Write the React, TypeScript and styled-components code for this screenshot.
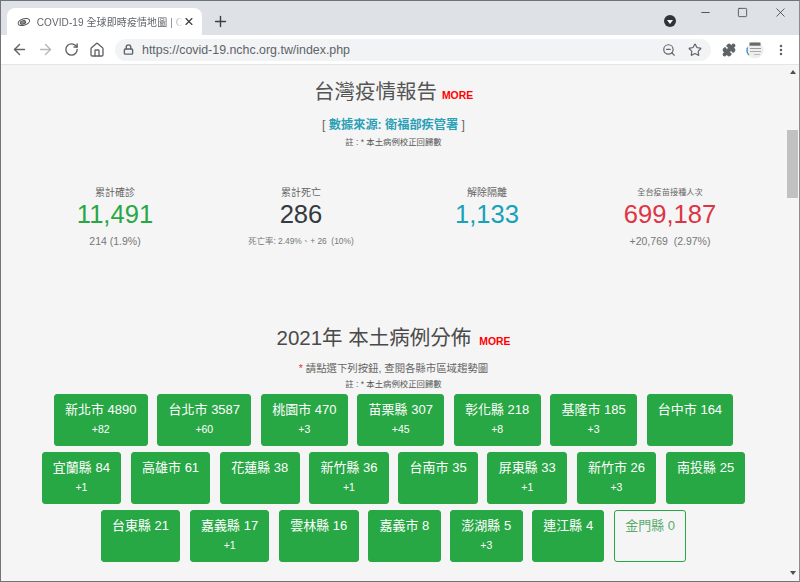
import React from "react";
import styled, { createGlobalStyle } from "styled-components";
import {
  ArrowLeft,
  ArrowRight,
  RotateCw,
  Home,
  Lock,
  ZoomOut,
  Star,
  Puzzle,
  MoreVertical,
  X,
  Plus,
  Minus,
  Square,
} from "lucide-react";

const FONT = `"Liberation Sans", "Noto Sans CJK TC", sans-serif`;

const GlobalStyle = createGlobalStyle`
  html, body {
    margin: 0;
    padding: 0;
    overflow: hidden;
  }
  * {
    box-sizing: border-box;
  }
`;

const Win = styled.div`
  width: 800px;
  height: 582px;
  display: flex;
  flex-direction: column;
  overflow: hidden;
  border: 1px solid #707478;
  border-right-color: #8a8d90;
  font-family: ${FONT};
`;

const TabStrip = styled.div`
  height: 34px;
  flex: none;
  display: flex;
  align-items: flex-end;
  padding-left: 6px;
  background: #dee1e6;
`;

const Tab = styled.div`
  width: 195px;
  height: 27px;
  display: flex;
  align-items: center;
  padding: 0 7px 0 10px;
  background: #fff;
  border-radius: 8px 8px 0 0;
  color: #5f6368;
  font-size: 10px;
`;

const TabTitle = styled.div`
  flex: 1;
  margin-left: 6px;
  letter-spacing: 0.1px;
  white-space: nowrap;
  -webkit-mask-image: linear-gradient(to right, #000 90%, transparent);
  mask-image: linear-gradient(to right, #000 90%, transparent);
`;

const NewTab = styled.div`
  width: 36px;
  height: 27px;
  display: flex;
  align-items: center;
  justify-content: center;
  color: #3c4043;
`;

const Spacer = styled.div`
  flex: 1;
`;

const ProfileDot = styled.div`
  width: 12px;
  height: 12px;
  margin: 0 11px 8px 0;
  display: flex;
  align-items: center;
  justify-content: center;
  border-radius: 50%;
  background: #303438;
  &::after {
    content: "";
    margin-top: 2px;
    border-left: 3px solid transparent;
    border-right: 3px solid transparent;
    border-top: 4px solid #fff;
  }
`;

const WinButtons = styled.div`
  align-self: flex-start;
  height: 23px;
  display: flex;
  align-items: center;
  color: #303438;
`;

const WinButton = styled.div`
  width: 37.5px;
  display: flex;
  justify-content: center;
`;

const Toolbar = styled.div`
  height: 30px;
  flex: none;
  display: flex;
  align-items: center;
  padding-left: 5px;
  background: #fff;
  border-bottom: 1px solid #e4e5e7;
`;

const ToolButton = styled.div<{ $muted?: boolean }>`
  width: 26px;
  height: 26px;
  flex: none;
  display: flex;
  align-items: center;
  justify-content: center;
  color: ${(p) => (p.$muted ? "#b4b7bb" : "#5f6368")};
`;

const Omnibox = styled.div`
  width: 596px;
  height: 22px;
  margin: 0 5px;
  display: flex;
  align-items: center;
  padding: 0 3px 0 8px;
  border-radius: 11px;
  background: #f1f3f4;
  color: #5f6368;
`;

const Url = styled.div`
  flex: 1;
  margin-left: 8px;
  font-size: 12.4px;
  white-space: nowrap;
`;

const Viewport = styled.div`
  flex: 1;
  min-height: 0;
  display: flex;
  background: #f5f5f5;
`;

const Page = styled.main`
  flex: 1;
  min-width: 0;
  display: flex;
  flex-direction: column;
  align-items: center;
  padding-top: 13px;
  color: #555;
`;

const Scrollbar = styled.div`
  width: 13px;
  flex: none;
  display: flex;
  flex-direction: column;
  align-items: center;
  padding-top: 5px;
`;

const ScrollArrow = styled.div<{ $down?: boolean }>`
  width: 0;
  height: 0;
  border-left: 3.5px solid transparent;
  border-right: 3.5px solid transparent;
  ${(p) =>
    p.$down
      ? "border-top: 4px solid #505050; margin-top: auto; margin-bottom: 6px;"
      : "border-bottom: 4px solid #505050;"}
`;

const ScrollThumb = styled.div`
  width: 11px;
  height: 68px;
  margin-top: 56px;
  background: #c1c1c1;
`;

const Heading = styled.h1`
  margin: 0;
  display: flex;
  align-items: baseline;
  gap: 5px;
  font-size: 20.5px;
  line-height: 28px;
  font-weight: 400;
  color: #555;
`;

const HeadingWide = styled(Heading)`
  gap: 8px;
  margin-top: 76px;
  color: #4a4a4a;
`;

const More = styled.span`
  font-size: 10.4px;
  font-weight: 700;
  color: #ff0000;
`;

const Source = styled.div`
  margin-top: 7px;
  font-size: 12.2px;
  line-height: 16px;
  color: #666;
  b {
    color: #2b9fb6;
  }
`;

const Note = styled.div<{ $tight?: boolean }>`
  margin-top: ${(p) => (p.$tight ? "2px" : "3px")};
  font-size: 8.4px;
  line-height: 12px;
  color: #555;
`;

const Hint = styled.div`
  margin-top: 6px;
  font-size: 10.4px;
  line-height: 14px;
  color: #666;
  span {
    color: #e0303c;
  }
`;

const Stats = styled.div`
  width: 100%;
  margin-top: 38px;
  padding-left: 21px;
  display: grid;
  grid-template-columns: 186px 186px 186px 180px;
`;

const Stat = styled.div`
  display: flex;
  flex-direction: column;
  align-items: center;
`;

const StatLabel = styled.div<{ $small?: boolean }>`
  height: 13px;
  font-size: ${(p) => (p.$small ? "8.2px" : "10px")};
  line-height: 13px;
  color: #666;
`;

const StatValue = styled.div<{ $color: string }>`
  margin-top: 2px;
  font-size: 25.6px;
  line-height: 27px;
  color: ${(p) => p.$color};
`;

const StatSub = styled.div<{ $small?: boolean }>`
  margin-top: 7px;
  font-size: ${(p) => (p.$small ? "8.4px" : "10.5px")};
  line-height: 13px;
  white-space: pre;
  color: #777;
`;

const Counties = styled.div`
  margin-top: 4px;
  display: flex;
  flex-direction: column;
  gap: 6.5px;
`;

const CountyRow = styled.div`
  display: flex;
  justify-content: center;
  gap: 9.5px;
`;

const CountyButton = styled.button<{ $empty?: boolean }>`
  height: 51.5px;
  padding: 7px 10.3px 0;
  display: flex;
  flex-direction: column;
  align-items: center;
  border: 1px solid #28a745;
  border-radius: 3px;
  background: ${(p) => (p.$empty ? "transparent" : "#28a745")};
  color: ${(p) => (p.$empty ? "#5aab70" : "#fff")};
  font-family: ${FONT};
  font-size: 13px;
  line-height: 16px;
  white-space: nowrap;
`;

const Delta = styled.span`
  margin-top: 5px;
  font-size: 10.5px;
  line-height: 13px;
`;

const Favicon = () => (
  <svg width="15" height="12" viewBox="0 0 15 12" fill="none" stroke="#555" strokeWidth="1.1">
    <ellipse cx="7.5" cy="6" rx="6.5" ry="3.4" transform="rotate(-18 7.5 6)" />
    <ellipse cx="6.5" cy="6.5" rx="3" ry="1.8" transform="rotate(-18 6.5 6.5)" fill="#8a8a8a" />
  </svg>
);

const Avatar = () => (
  <svg width="18" height="18" viewBox="0 0 18 18">
    <circle cx="9" cy="9" r="8.5" fill="#eeeeee" />
    <rect x="3.5" y="1.5" width="11" height="3.2" fill="#6a6a6a" />
    <path d="M1.5 6.5 A8 8 0 0 0 1.5 12" stroke="#2f7de1" strokeWidth="1.2" fill="none" />
    <path d="M1.5 12 A8 8 0 0 0 3 14" stroke="#34a853" strokeWidth="1.2" fill="none" />
    <rect x="4" y="7" width="11" height="1" fill="#999" />
    <rect x="4" y="10" width="11" height="1" fill="#aaa" />
    <rect x="8" y="13" width="6" height="1" fill="#bbb" />
  </svg>
);

const rows: { name: string; delta?: string }[][] = [
  [
    { name: "新北市 4890", delta: "+82" },
    { name: "台北市 3587", delta: "+60" },
    { name: "桃園市 470", delta: "+3" },
    { name: "苗栗縣 307", delta: "+45" },
    { name: "彰化縣 218", delta: "+8" },
    { name: "基隆市 185", delta: "+3" },
    { name: "台中市 164" },
  ],
  [
    { name: "宜蘭縣 84", delta: "+1" },
    { name: "高雄市 61" },
    { name: "花蓮縣 38" },
    { name: "新竹縣 36", delta: "+1" },
    { name: "台南市 35" },
    { name: "屏東縣 33", delta: "+1" },
    { name: "新竹市 26", delta: "+3" },
    { name: "南投縣 25" },
  ],
  [
    { name: "台東縣 21" },
    { name: "嘉義縣 17", delta: "+1" },
    { name: "雲林縣 16" },
    { name: "嘉義市 8" },
    { name: "澎湖縣 5", delta: "+3" },
    { name: "連江縣 4" },
    { name: "金門縣 0" },
  ],
];

export default function App() {
  return (
    <Win>
      <GlobalStyle />
      <TabStrip>
        <Tab>
          <Favicon />
          <TabTitle>COVID-19 全球即時疫情地圖 | C</TabTitle>
          <X size={13} strokeWidth={2.4} color="#3c4043" />
        </Tab>
        <NewTab>
          <Plus size={17} strokeWidth={2} />
        </NewTab>
        <Spacer />
        <ProfileDot />
        <WinButtons>
          <WinButton>
            <Minus size={13} strokeWidth={1.5} />
          </WinButton>
          <WinButton>
            <Square size={11} strokeWidth={1.6} />
          </WinButton>
          <WinButton>
            <X size={15} strokeWidth={1.2} />
          </WinButton>
        </WinButtons>
      </TabStrip>
      <Toolbar>
        <ToolButton>
          <ArrowLeft size={17} strokeWidth={2} />
        </ToolButton>
        <ToolButton $muted>
          <ArrowRight size={17} strokeWidth={2} />
        </ToolButton>
        <ToolButton>
          <RotateCw size={15} strokeWidth={2.2} />
        </ToolButton>
        <ToolButton>
          <Home size={16} strokeWidth={2} />
        </ToolButton>
        <Omnibox>
          <Lock size={11} strokeWidth={3} />
          <Url>https://covid-19.nchc.org.tw/index.php</Url>
          <ToolButton>
            <ZoomOut size={14} strokeWidth={2} />
          </ToolButton>
          <ToolButton>
            <Star size={14} strokeWidth={2} />
          </ToolButton>
        </Omnibox>
        <ToolButton>
          <Puzzle size={14} fill="#5f6368" />
        </ToolButton>
        <ToolButton>
          <Avatar />
        </ToolButton>
        <ToolButton>
          <MoreVertical size={14} strokeWidth={2.4} />
        </ToolButton>
      </Toolbar>
      <Viewport>
        <Page>
          <Heading>
            台灣疫情報告<More>MORE</More>
          </Heading>
          <Source>
            [ <b>數據來源: 衛福部疾管署</b> ]
          </Source>
          <Note>註 : * 本土病例校正回歸數</Note>
          <Stats>
            <Stat>
              <StatLabel>累計確診</StatLabel>
              <StatValue $color="#28a745">11,491</StatValue>
              <StatSub>214 (1.9%)</StatSub>
            </Stat>
            <Stat>
              <StatLabel>累計死亡</StatLabel>
              <StatValue $color="#343a40">286</StatValue>
              <StatSub $small>死亡率: 2.49%、+ 26  (10%)</StatSub>
            </Stat>
            <Stat>
              <StatLabel>解除隔離</StatLabel>
              <StatValue $color="#17a2b8">1,133</StatValue>
            </Stat>
            <Stat>
              <StatLabel $small>全台疫苗接種人次</StatLabel>
              <StatValue $color="#dc3545">699,187</StatValue>
              <StatSub>+20,769  (2.97%)</StatSub>
            </Stat>
          </Stats>
          <HeadingWide>
            2021年 本土病例分佈<More>MORE</More>
          </HeadingWide>
          <Hint>
            <span>*</span> 請點選下列按鈕, 查閱各縣市區域趨勢圖
          </Hint>
          <Note $tight>註 : * 本土病例校正回歸數</Note>
          <Counties>
            {rows.map((row, i) => (
              <CountyRow key={i}>
                {row.map((c) => (
                  <CountyButton key={c.name} $empty={c.name === "金門縣 0"}>
                    {c.name}
                    {c.delta && <Delta>{c.delta}</Delta>}
                  </CountyButton>
                ))}
              </CountyRow>
            ))}
          </Counties>
        </Page>
        <Scrollbar>
          <ScrollArrow />
          <ScrollThumb />
          <ScrollArrow $down />
        </Scrollbar>
      </Viewport>
    </Win>
  );
}
